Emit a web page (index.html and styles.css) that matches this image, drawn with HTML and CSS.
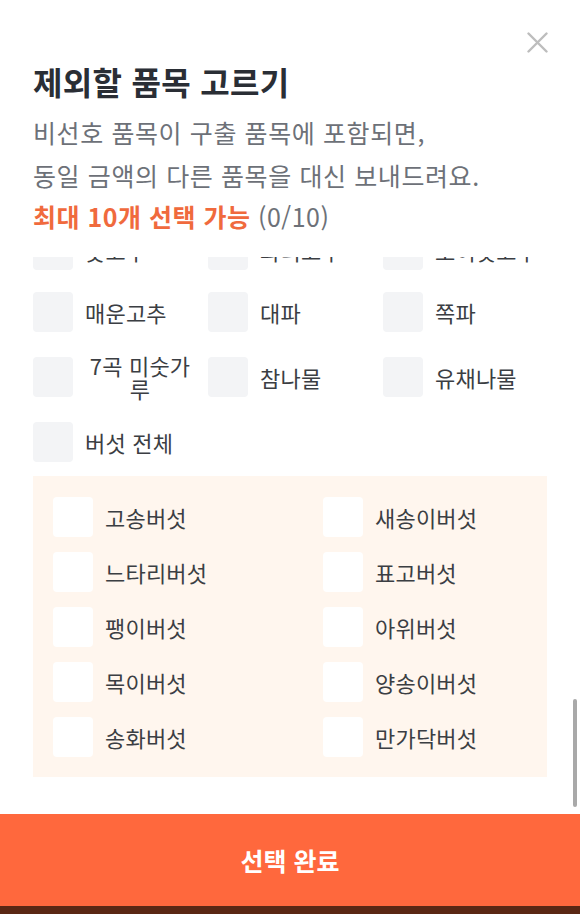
FILE: index.html
```html
<!DOCTYPE html>
<html lang="ko">
<head>
<meta charset="utf-8">
<title>제외할 품목 고르기</title>
<link rel="stylesheet" href="styles.css">
</head>
<body>
<div class="sheet">
  <header class="header">
    <div class="topbar">
      <button class="close" aria-label="닫기">
        <svg width="21" height="21" viewBox="0 0 21 21"><path d="M1.5 1.5 L19.5 19.5 M19.5 1.5 L1.5 19.5" stroke="#bdbdbd" stroke-width="2.4" stroke-linecap="round" fill="none"/></svg>
      </button>
    </div>
    <h1 class="title">제외할 품목 고르기</h1>
    <p class="desc">비선호 품목이 구출 품목에 포함되면,<br>동일 금액의 다른 품목을 대신 보내드려요.</p>
    <p class="limit"><strong>최대 10개 선택 가능</strong> <span class="count">(0/10)</span></p>
  </header>

  <div class="list">
    <div class="grid">
      <label class="item"><span class="box"></span><span class="name">풋고추</span></label>
      <label class="item"><span class="box"></span><span class="name">꽈리고추</span></label>
      <label class="item"><span class="box"></span><span class="name">오이맛고추</span></label>
      <label class="item"><span class="box"></span><span class="name">매운고추</span></label>
      <label class="item"><span class="box"></span><span class="name">대파</span></label>
      <label class="item"><span class="box"></span><span class="name">쪽파</span></label>
      <label class="item"><span class="box"></span><span class="name">7곡 미숫가루</span></label>
      <label class="item"><span class="box"></span><span class="name">참나물</span></label>
      <label class="item"><span class="box"></span><span class="name">유채나물</span></label>
      <label class="item"><span class="box"></span><span class="name">버섯 전체</span></label>
    </div>
    <div class="panel">
      <label class="item"><span class="box white"></span><span class="name">고송버섯</span></label>
      <label class="item"><span class="box white"></span><span class="name">새송이버섯</span></label>
      <label class="item"><span class="box white"></span><span class="name">느타리버섯</span></label>
      <label class="item"><span class="box white"></span><span class="name">표고버섯</span></label>
      <label class="item"><span class="box white"></span><span class="name">팽이버섯</span></label>
      <label class="item"><span class="box white"></span><span class="name">아위버섯</span></label>
      <label class="item"><span class="box white"></span><span class="name">목이버섯</span></label>
      <label class="item"><span class="box white"></span><span class="name">양송이버섯</span></label>
      <label class="item"><span class="box white"></span><span class="name">송화버섯</span></label>
      <label class="item"><span class="box white"></span><span class="name">만가닥버섯</span></label>
    </div>
    <div class="thumb"></div>
  </div>

  <button class="submit">선택 완료</button>
  <div class="backdrop"></div>
</div>
</body>
</html>
```
FILE: styles.css
```css
html, body {
  margin: 0;
  padding: 0;
  width: 580px;
  height: 914px;
  overflow: hidden;
  background: #ffffff;
}

.sheet {
  width: 580px;
  height: 914px;
  display: flex;
  flex-direction: column;
  font-family: "Noto Sans CJK KR", "Noto Sans", sans-serif;
  background: #ffffff;
}

.header {
  padding: 32px 32px 22px 33px;
  flex: none;
}

.topbar {
  display: flex;
  justify-content: flex-end;
  height: 21px;
}

.close {
  width: 21px;
  height: 21px;
  padding: 0;
  border: 0;
  background: none;
  display: block;
}

.close svg {
  display: block;
}

.title {
  margin: 10px 0 0;
  font-size: 32px;
  line-height: 36px;
  font-weight: 700;
  color: #2a2e35;
  letter-spacing: 0.3px;
}

.desc {
  margin: 12px 0 0;
  font-size: 25px;
  line-height: 43px;
  color: #6d7178;
  font-weight: 400;
  letter-spacing: 0.6px;
}

.limit {
  margin: 0;
  font-size: 25px;
  line-height: 38px;
  letter-spacing: 0.5px;
}

.limit strong {
  color: #f06a3d;
  font-weight: 700;
}

.limit .count {
  color: #6d7178;
  font-weight: 400;
}

.list {
  flex: 1;
  position: relative;
  overflow: hidden;
  display: flex;
  flex-direction: column;
  justify-content: flex-end;
  padding: 0 33px 37px;
}

.grid {
  display: grid;
  grid-template-columns: 162px 162px 162px;
  column-gap: 13px;
  row-gap: 22px;
  flex: none;
}

.item {
  display: flex;
  align-items: center;
  gap: 12px;
  min-width: 0;
}

.box {
  flex: none;
  width: 40px;
  height: 40px;
  border-radius: 4px;
  background: #f3f4f6;
}

.box.white {
  background: #ffffff;
}

.name {
  font-size: 22px;
  line-height: 23px;
  color: #3b3e43;
  text-align: center;
  min-width: 0;
  letter-spacing: 0.2px;
}

.panel {
  flex: none;
  margin-top: 14px;
  background: #fff6ee;
  padding: 21px 20px 20px;
  display: grid;
  grid-template-columns: 270px 1fr;
  row-gap: 15px;
}

.thumb {
  position: absolute;
  right: 3px;
  top: 442px;
  width: 4px;
  height: 108px;
  border-radius: 2px;
  background: #a9a9a9;
}

.submit {
  flex: none;
  height: 92px;
  border: 0;
  margin: 0;
  padding: 0;
  background: #ff683d;
  color: #ffffff;
  font-family: "Noto Sans CJK KR", "Noto Sans", sans-serif;
  font-size: 25px;
  font-weight: 700;
  width: 100%;
}

.backdrop {
  flex: none;
  height: 8px;
  background: #5a2714;
}
```
